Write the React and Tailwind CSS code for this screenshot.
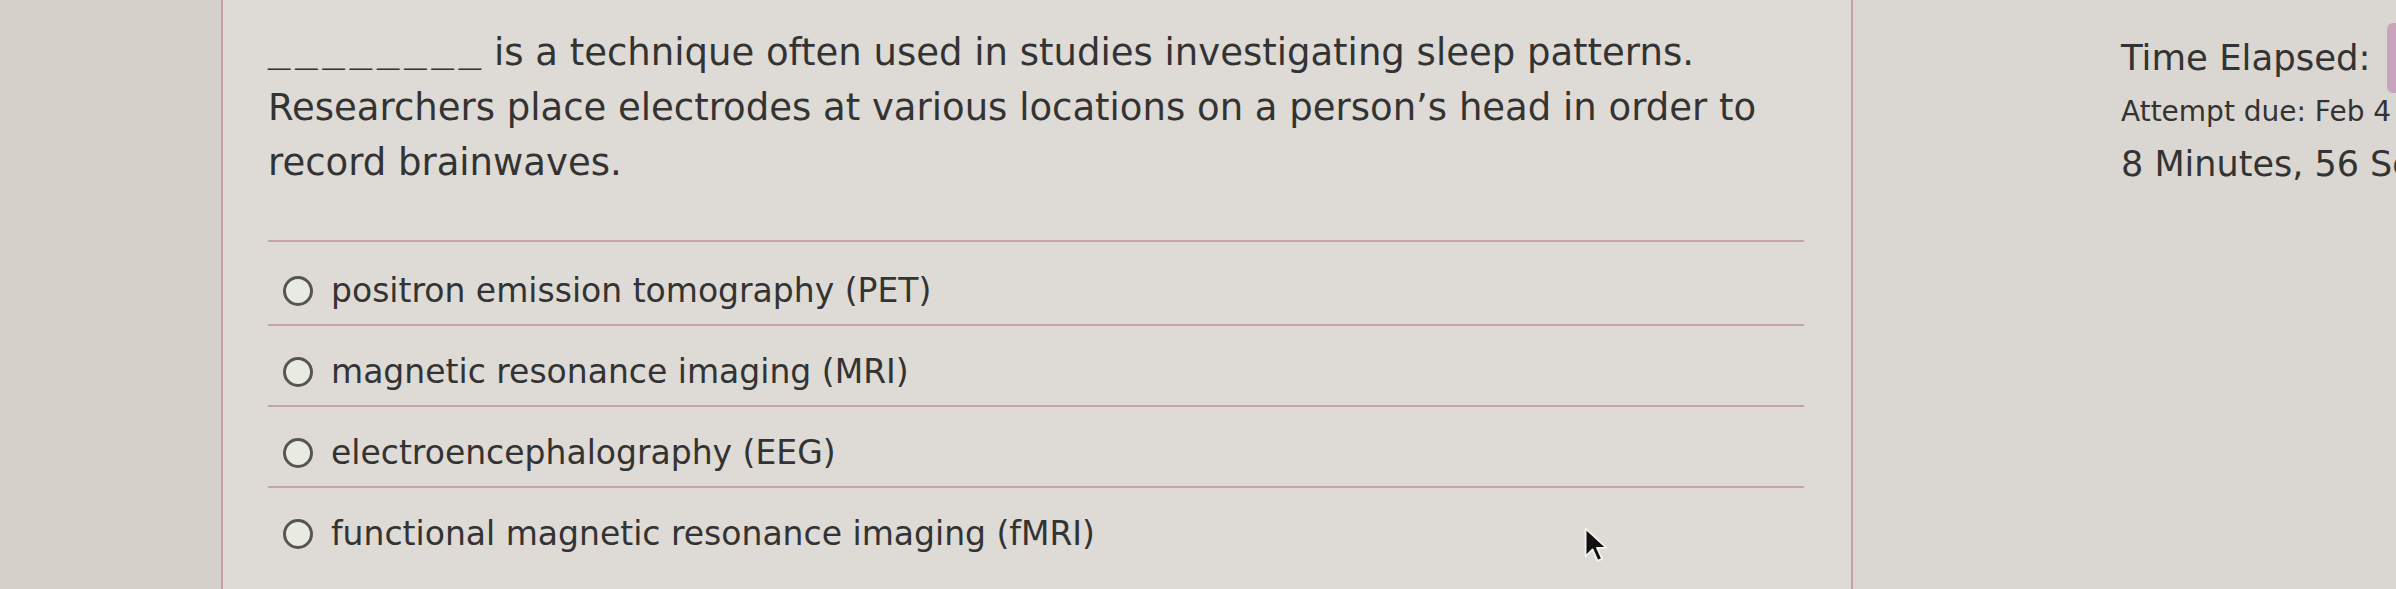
import React from "react";

const options = [
  "positron emission tomography (PET)",
  "magnetic resonance imaging (MRI)",
  "electroencephalography (EEG)",
  "functional magnetic resonance imaging (fMRI)",
];

function Cursor() {
  return (
    <svg width="28" height="38" viewBox="0 0 22 30" className="absolute left-[1583px] top-[526px]">
      <path d="M2 2 L2 24 L7.5 18.5 L11.5 27.5 L15 26 L11 17.2 L18.5 17.2 Z" fill="#111" stroke="#f4f4f4" strokeWidth="1.4" strokeLinejoin="round" />
    </svg>
  );
}

export default function App() {
  return (
    <div className="relative flex h-[589px] w-[2396px] overflow-hidden bg-[#dbd7d2] font-['DejaVu_Sans',sans-serif] text-[#333333]">
      <div className="h-full w-[221px] shrink-0 bg-[#d6d0cb]" />
      <div className="h-full w-[2px] shrink-0 bg-[#c49faa]" />
      <main className="h-full w-[1628px] shrink-0 bg-[#dedad5] pl-[45px] pt-[25px]">
        <div className="w-[1536px]">
          <p className="h-[215px] whitespace-nowrap text-[37px] leading-[55px]">
            <span className="mr-[8px] inline-block font-['Liberation_Sans',sans-serif] text-[40px] font-bold leading-[36px] tracking-[5px] text-[#333333]">________</span>
            is a technique often used in studies investigating sleep patterns.
            <br />
            Researchers place electrodes at various locations on a person’s head in order to
            <br />
            record brainwaves.
          </p>
          <div>
            {options.map((o, i) => (
              <div
                key={o}
                className={`flex items-center border-t-2 border-[#c6a2ab] pl-[15px] ${i === 0 ? "h-[84px] pt-[16px]" : "h-[81px] pt-[12px]"}`}
              >
                <span className="h-[30px] w-[30px] shrink-0 rounded-full border-[3px] border-[#555555] bg-[#e9ebe3]" />
                <span className="ml-[18px] whitespace-nowrap text-[33px] leading-[44px]">{o}</span>
              </div>
            ))}
          </div>
        </div>
      </main>
      <div className="h-full w-[2px] shrink-0 bg-[#c49faa]" />
      <aside className="relative h-full flex-1 bg-[#dad6d1] pl-[268px] pt-[30px]">
        <div className="whitespace-nowrap text-[35.5px] leading-[56px]">Time Elapsed:</div>
        <div className="whitespace-nowrap text-[28px] leading-[52px]">Attempt due: Feb 4</div>
        <div className="whitespace-nowrap text-[35px] leading-[52px]">8 Minutes, 56 Seconds</div>
        <div className="absolute left-[534px] top-[23px] h-[70px] w-[20px] rounded-[6px] bg-[#c8a3bc]" />
      </aside>
      <Cursor />
    </div>
  );
}
